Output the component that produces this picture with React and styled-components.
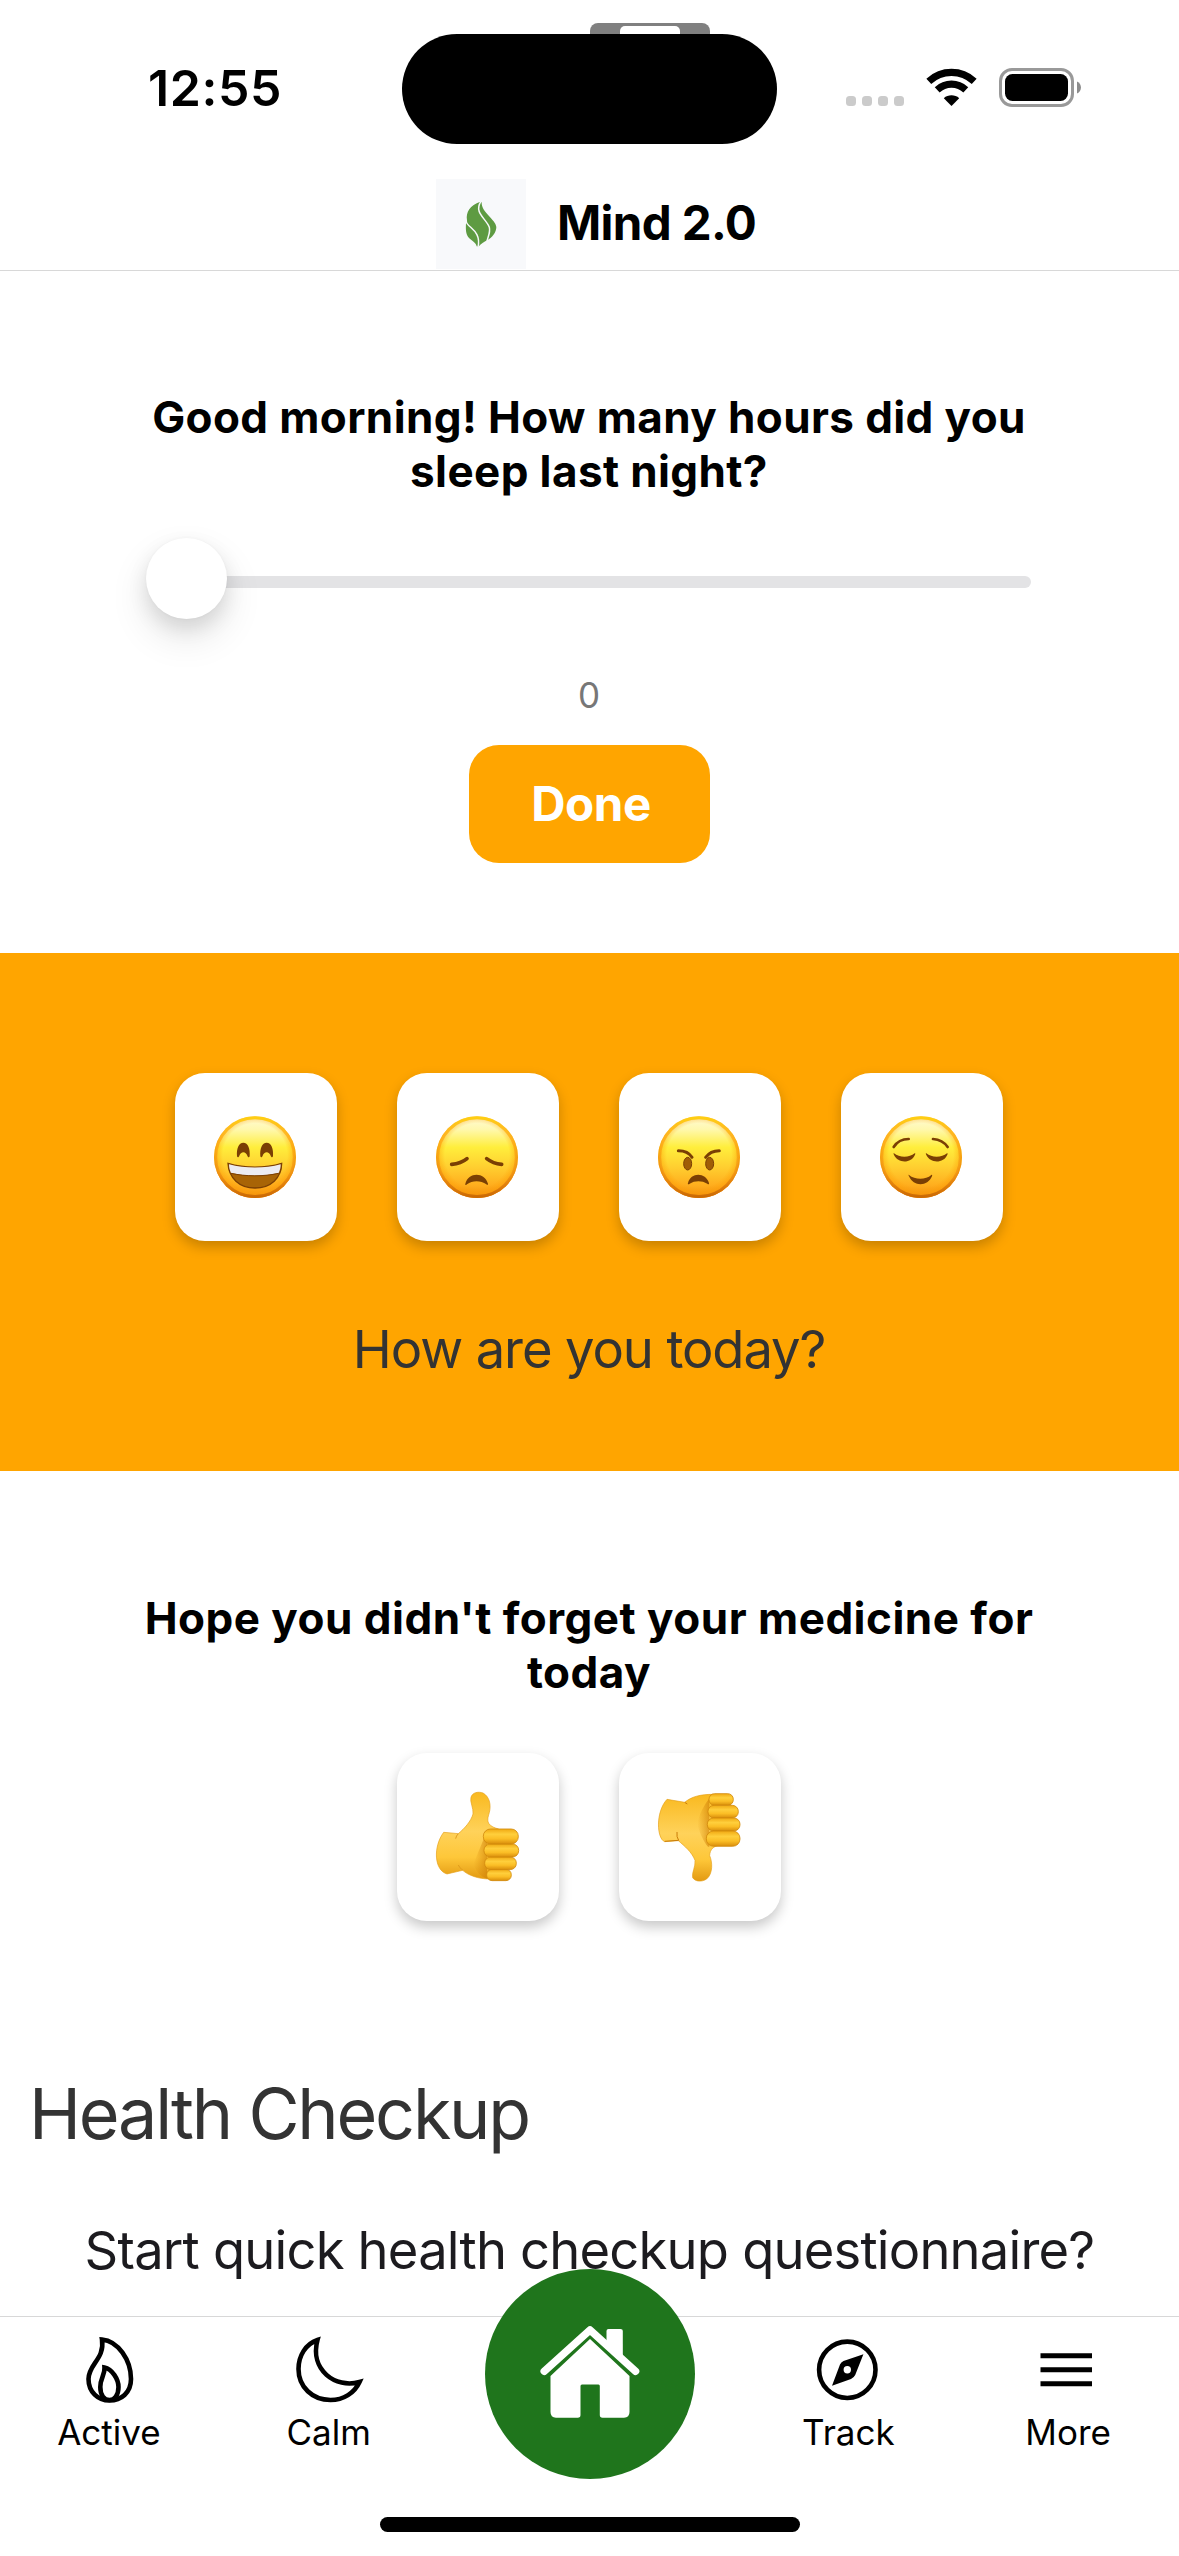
import React from "react";
import styled, { createGlobalStyle } from "styled-components";

const GlobalStyle = createGlobalStyle`
  *, *::before, *::after { box-sizing: border-box; }
  body { margin: 0; background: #fff; }
`;

const Screen = styled.div`
  display: flex;
  flex-direction: column;
  width: 1179px;
  height: 2556px;
  overflow: hidden;
  background: #fff;
  color: #000;
  font-family: Inter, "Liberation Sans", sans-serif;
`;

/* ---------- status bar ---------- */
const StatusBar = styled.header`
  display: grid;
  grid-template-columns: 402px 375px 402px;
  height: 179px;
  flex: none;
`;
const Clock = styled.div`
  padding: 58px 0 0 148px;
  font-size: 50px;
  line-height: 60px;
  font-weight: 600;
  letter-spacing: ${(p) => p.$tracking}px;
`;
const IslandArea = styled.div`
  position: relative;
  padding-top: 33.5px;
`;
const Island = styled.div`
  position: relative;
  height: 110.5px;
  border-radius: 55.5px;
  background: #000;
`;
const BackTab = styled.div`
  position: absolute;
  left: 188px;
  top: 23px;
  width: 120px;
  height: 30px;
  padding: 3px 30px 0;
  border-radius: 8px;
  background: #808080;
  &::after {
    content: "";
    display: block;
    height: 20px;
    border-radius: 5px;
    background: #fff;
  }
`;
const StatusIcons = styled.div`
  display: flex;
  align-items: flex-start;
  padding: 68px 0 0 69px;
`;
const Signal = styled.div`
  display: flex;
  gap: 6px;
  margin-top: 28px;
  margin-right: 22px;
`;
const Dot = styled.i`
  width: 10px;
  height: 10px;
  border-radius: 3.5px;
  background: #cbcbcb;
`;
const BatterySlot = styled.div`
  margin-left: 22px;
`;

/* ---------- title ---------- */
const TitleBar = styled.div`
  display: flex;
  align-items: flex-start;
  flex: none;
  height: 92px;
  padding-left: 436px;
  border-bottom: 1px solid #d8d8d8;
`;
const LogoTile = styled.div`
  width: 90px;
  height: 90px;
  background: #f8f9fb;
`;
const Title = styled.h1`
  margin: 15px 0 0 31px;
  font-size: 47.5px;
  line-height: 58px;
  font-weight: 700;
  letter-spacing: ${(p) => p.$tracking}px;
`;

/* ---------- content ---------- */
const Content = styled.main`
  flex: 1;
  min-height: 0;
  overflow: hidden;
`;
const Section = styled.section`
  display: flex;
  flex-direction: column;
  align-items: center;
  height: ${(p) => p.$height}px;
  padding-top: ${(p) => p.$top}px;
  padding-right: 1px;
  background: ${(p) => p.$bg || "transparent"};
`;
const Question = styled.h2`
  margin: 0;
  font-size: 44px;
  line-height: 54px;
  font-weight: 700;
  text-align: center;
  white-space: nowrap;
  letter-spacing: ${(p) => p.$tracking}px;
`;
const Slider = styled.div`
  display: flex;
  align-items: center;
  width: 886px;
  height: 81px;
  margin-top: 40px;
`;
const Thumb = styled.div`
  flex: none;
  position: relative;
  width: 81px;
  height: 81px;
  border-radius: 50%;
  background: #fff;
  box-shadow: 0 18px 39px rgba(0, 0, 0, 0.11), 0 9px 20px rgba(0, 0, 0, 0.1), 0 0 3px rgba(0, 0, 0, 0.04);
`;
const Track = styled.div`
  flex: 1;
  height: 12px;
  margin: 6px 1px 0 -40px;
  border-radius: 6px;
  background: #e3e3e5;
`;
const Value = styled.div`
  margin-top: 55px;
  font-size: 35px;
  line-height: 42px;
  color: #777;
`;
const DoneButton = styled.button`
  width: 241px;
  height: 118px;
  margin-top: 29px;
  padding: 0 0 0 4px;
  border: 0;
  border-radius: 30px;
  background: #ffa500;
  color: #fff;
  font: 700 47.5px/58px Inter, "Liberation Sans", sans-serif;
  letter-spacing: ${(p) => p.$tracking}px;
`;
const CardRow = styled.div`
  display: flex;
  gap: 60px;
  margin-top: ${(p) => p.$mt || 0}px;
`;
const Card = styled.button`
  display: flex;
  align-items: center;
  justify-content: center;
  width: 162px;
  height: 168px;
  padding: 0 ${(p) => p.$inset || 0}px 0 0;
  border: 0;
  border-radius: 30px;
  background: #fff;
  box-shadow: 0 6px 13px rgba(0, 0, 0, 0.22);
`;
const MoodPrompt = styled.p`
  margin: 77px 0 0;
  font-size: 52.5px;
  line-height: 62px;
  color: #333;
  letter-spacing: ${(p) => p.$tracking}px;
`;
const Checkup = styled.section`
  padding-top: 151px;
`;
const CheckupTitle = styled.h2`
  margin: 0 0 0 29px;
  font-size: 70px;
  line-height: 84px;
  font-weight: 400;
  color: #333;
  letter-spacing: ${(p) => p.$tracking}px;
`;
const CheckupText = styled.p`
  margin: 63px 0 0;
  font-size: 52.5px;
  line-height: 62px;
  text-align: center;
  white-space: nowrap;
  color: #1c1b1f;
  letter-spacing: ${(p) => p.$tracking}px;
`;

/* ---------- tab bar ---------- */
const TabBar = styled.nav`
  position: relative;
  flex: none;
  height: 240px;
  border-top: 1px solid #d8d8d8;
  background: #fff;
`;
const Tabs = styled.div`
  display: flex;
  width: 1179px;
  height: 200px;
  margin-left: -1px;
`;
const Tab = styled.div`
  display: flex;
  flex: 1;
  flex-direction: column;
  align-items: center;
  padding-top: 13px;
  svg { display: block; }
`;
const TabLabel = styled.span`
  margin-top: 1px;
  font-size: 35px;
  line-height: 42px;
`;
const HomeSlot = styled.div`
  flex: none;
  width: 300px;
`;
const HomeButton = styled.button`
  display: flex;
  align-items: flex-start;
  justify-content: center;
  width: 210px;
  height: 210px;
  margin: -48px 0 0 46px;
  padding: 56px 0 0;
  border: 0;
  border-radius: 50%;
  background: #1f751c;
`;
const HomeIndicator = styled.div`
  width: 420px;
  height: 15px;
  margin: 0 auto;
  border-radius: 7.5px;
  background: #000;
`;

/* ---------- drawings ---------- */
const Logo = () => (
  <svg width="90" height="90" viewBox="48 27 270 270">
    <path fill="#5e9b42" d="M181 95C150 105 137 126 141 151C142 157 141 158 138 160C137 178 137 193 147 204C156 213 169 219 170 229L175 230C182 222 193 215 201 211C216 203 229 188 229 171C227 148 184 128 185 97Z" />
    <path fill="none" stroke="#f8f9fb" strokeWidth="4.5" d="M183 94C160 128 199 146 208 172C212 188 203 201 201 214" />
    <path fill="none" stroke="#f8f9fb" strokeWidth="4.5" d="M138 154C143 174 185 181 174 232" />
  </svg>
);

const Wifi = () => (
  <svg width="51" height="39" viewBox="0 0 51 39" fill="none" stroke="#000">
    <path strokeWidth="7.2" d="M2.8 13.3C15.8 1.4 35.2 1.4 48.2 13.3" />
    <path strokeWidth="7.2" d="M11.2 21.9C19.4 14.3 31.6 14.3 39.8 21.9" />
    <path fill="#000" stroke="none" d="M17.8 30.2C22 26.4 29 26.4 33.2 30.2L25.5 38Z" />
  </svg>
);

const Battery = () => (
  <svg width="83" height="39" viewBox="0 0 83 39">
    <rect x="1.5" y="1.5" width="72" height="36" rx="11.5" fill="none" stroke="#999" strokeWidth="3" />
    <rect x="6" y="6" width="63" height="27" rx="7.5" />
    <path fill="#8c8c8c" d="M78 13.5C83.3 15.5 83.3 23.5 78 25.5Z" />
  </svg>
);

const brown = "#7a3f04";

const Face = ({ id, children }) => (
  <svg width="82" height="82.3" viewBox="0 0 246 247">
    <defs>
      <linearGradient id={`${id}-base`} x1="0" y1="0" x2="0" y2="1">
        <stop offset="0" stopColor="#fffbd6" />
        <stop offset=".16" stopColor="#fff8ae" />
        <stop offset=".38" stopColor="#ffee3c" />
        <stop offset=".62" stopColor="#ffcf30" />
        <stop offset=".84" stopColor="#ffae1e" />
        <stop offset="1" stopColor="#f08f10" />
      </linearGradient>
      <radialGradient id={`${id}-edge`} cx=".5" cy=".48" r=".53">
        <stop offset=".74" stopColor="#ff9c00" stopOpacity="0" />
        <stop offset=".9" stopColor="#fb9700" stopOpacity=".45" />
        <stop offset="1" stopColor="#e07205" stopOpacity=".95" />
      </radialGradient>
      <linearGradient id={`${id}-rim`} x1="0" y1="0" x2="0" y2="1">
        <stop offset="0" stopColor="#ffce12" />
        <stop offset=".3" stopColor="#ff9d08" stopOpacity=".6" />
        <stop offset=".7" stopColor="#e88310" stopOpacity=".5" />
        <stop offset="1" stopColor="#c46404" stopOpacity=".85" />
      </linearGradient>
    </defs>
    <circle cx="123" cy="123.5" r="123" fill={`url(#${id}-base)`} />
    <circle cx="123" cy="123.5" r="123" fill={`url(#${id}-edge)`} />
    <circle cx="123" cy="123.5" r="118" fill="none" stroke={`url(#${id}-rim)`} strokeWidth="9" />
    {children}
  </svg>
);

const HappyFace = () => (
  <Face id="happy">
    <path fill={brown} d="M69 121C67 98 74 80 88 80C102 80 109 98 107 121C105 126 101 123 100 119C96 105 80 105 76 119C75 123 71 126 69 121Z" />
    <path fill={brown} d="M139 121C137 98 144 80 158 80C172 80 179 98 177 121C175 126 171 123 170 119C166 105 150 105 146 119C145 123 141 126 139 121Z" />
    <path fill="#a86406" stroke={brown} strokeWidth="4" d="M42 142C92 157 154 157 203 142C203 186 170 216 123 216C76 216 44 186 42 142Z" />
    <path fill="#ececf2" d="M45 145C92 158 154 158 200 145C200 154 198 163 194 171C150 181 95 181 51 171C47 163 45 154 45 145Z" />
    <path fill="none" stroke={brown} strokeWidth="3" d="M51 172C95 182 150 182 194 172" />
  </Face>
);
const SadFace = () => (
  <Face id="sad">
    <path fill="none" stroke={brown} strokeWidth="11" strokeLinecap="round" d="M47 145Q75 143 93 128M152 128Q171 143 197 145" />
    <path fill={brown} d="M88 203C97 167 146 167 156 203C157 208 153 207 151 205C134 193 109 193 93 205C90 208 87 207 88 203Z" />
  </Face>
);
const AngryFace = () => (
  <Face id="angry">
    <path fill="none" stroke={brown} strokeWidth="9" strokeLinecap="round" d="M61 104Q90 104 102 124M143 124Q157 104 184 104" />
    <ellipse cx="89" cy="143" rx="12" ry="19" fill="#a05d06" stroke={brown} strokeWidth="3" />
    <ellipse cx="155" cy="143" rx="12" ry="19" fill="#a05d06" stroke={brown} strokeWidth="3" />
    <path fill={brown} d="M90 201C98 168 143 168 153 201C154 206 150 205 148 203C132 193 110 193 95 203C92 206 88 205 90 201Z" />
  </Face>
);
const CalmFace = () => (
  <Face id="calm">
    <path fill="none" stroke={brown} strokeWidth="8" strokeLinecap="round" d="M41 93Q56 69 86 69M159 69Q188 71 203 93" />
    <path fill={brown} d="M42 112C58 126 88 126 104 112C107 111 106 114 105 116C94 143 54 143 42 117C40 113 40 111 42 112Z" />
    <path fill={brown} d="M139 112C155 126 185 126 201 112C204 111 203 114 202 116C191 143 151 143 139 117C137 113 137 111 139 112Z" />
    <path fill={brown} d="M87 177C105 192 137 192 154 177C157 175 157 178 156 181C143 213 100 213 87 181C85 177 85 175 87 177Z" />
  </Face>
);

const HandDefs = ({ id }) => (
  <defs>
    <linearGradient id={`${id}-palm`} x1="0" y1="0" x2="0" y2="1">
      <stop offset="0" stopColor="#f9b91f" />
      <stop offset=".45" stopColor="#ffd25a" />
      <stop offset=".75" stopColor="#fec739" />
      <stop offset="1" stopColor="#e39a12" />
    </linearGradient>
    <linearGradient id={`${id}-finger`} x1="0" y1="0" x2="0" y2="1">
      <stop offset="0" stopColor="#f0a913" />
      <stop offset=".35" stopColor="#ffcf3c" />
      <stop offset=".65" stopColor="#fbbe26" />
      <stop offset="1" stopColor="#d98d0b" />
    </linearGradient>
    <linearGradient id={`${id}-fold`} x1="0" y1="0" x2="1" y2="0">
      <stop offset="0" stopColor="#d98a0a" stopOpacity="0" />
      <stop offset="1" stopColor="#cf8007" stopOpacity=".65" />
    </linearGradient>
  </defs>
);
const Fingers = ({ id, items }) =>
  items.map(([x, y, w, h]) => (
    <rect key={y} x={x} y={y} width={w} height={h} rx={h / 2.1} fill={`url(#${id}-finger)`} stroke="#d38a0c" strokeWidth="2.5" />
  ));

const ThumbUp = () => (
  <svg width="90" height="93.3" viewBox="190 180 270 280">
    <HandDefs id="up" />
    <path fill="url(#up-palm)" stroke="#e5a01a" strokeWidth="2" d="M222 307L266 311C285 295 304 274 310 252C312 234 300 216 304 202C308 187 326 184 340 189C359 200 364 222 360 243C357 257 351 268 357 280C364 290 375 294 387 297L400 440L360 447C325 447 296 436 279 421L232 432C193 421 190 350 222 307Z" />
    <path fill="none" stroke="#df9c1d" strokeWidth="3" d="M266 311Q259 318 258 326M266 405Q269 414 280 421" />
    <path fill="url(#up-fold)" d="M343 325C333 350 322 375 312 400C318 425 332 440 352 446L352 325Z" />
    <Fingers id="up" items={[[351, 418, 74, 34], [345, 381, 95, 38], [343, 342, 104, 39], [341, 297, 105, 45]]} />
  </svg>
);
const ThumbDown = () => (
  <svg width="90" height="93.3" viewBox="855 180 270 280">
    <HandDefs id="down" />
    <path fill="url(#down-palm)" stroke="#e5a01a" strokeWidth="2" d="M891 208L944 217C965 200 990 193 1030 193L1050 345C1030 349 1020 358 1019 377C1027 395 1030 430 1010 447C995 457 975 455 968 443C965 426 977 412 975 391C965 365 943 348 925 332L884 335C860 326 856 246 891 208Z" />
    <path fill="none" stroke="#c97c09" strokeWidth="3" d="M884 334L926 331Q919 322 921 306M944 217L952 222" />
    <path fill="url(#down-fold)" d="M1018 205C1003 225 985 255 982 285C990 310 1000 335 1014 350L1018 350Z" />
    <Fingers id="down" items={[[1017, 191, 73, 35], [1014, 226, 91, 38], [1012, 264, 98, 39], [1009, 303, 101, 46]]} />
  </svg>
);

const line = { fill: "none", stroke: "#000", strokeWidth: 4.6, strokeLinejoin: "miter" };
const FlameIcon = () => (
  <svg width="80" height="80" viewBox="69 2330 80 80" {...line}>
    <path d="M102 2339.5C118 2341 131 2360 131 2379C131 2393 121 2400.5 109.5 2400.5C98 2400.5 88.5 2392 88.5 2379C88.5 2364 105 2359 102 2339.5Z" />
    <path d="M104.5 2367.5C112 2369 118.5 2379 118.5 2387C118.5 2395 114.5 2400 109.5 2400C104 2400 100.3 2395 100.3 2387C100.3 2378 105 2375 104.5 2367.5Z" />
  </svg>
);
const MoonIcon = () => (
  <svg width="80" height="80" viewBox="289.5 2330 80 80" {...line}>
    <path d="M318 2340C306 2344 299 2356 299 2369C299 2387 313 2400 331 2400C344 2400 355 2393 360 2382C336 2389 310 2370 318 2340Z" />
  </svg>
);
const CompassIcon = () => (
  <svg width="80" height="80" viewBox="808 2330 80 80">
    <circle cx="847.3" cy="2369.8" r="28.2" {...line} />
    <path fillRule="evenodd" d="M863.4 2354.2L855.2 2375Q854 2377.5 851 2379L832 2385.7L840 2364.5Q841 2362 843.5 2361Z M847.3 2366A3.7 3.7 0 1 0 847.3 2373.4A3.7 3.7 0 1 0 847.3 2366Z" />
  </svg>
);
const MenuIcon = () => (
  <svg width="80" height="80" viewBox="1028 2330 80 80">
    <path stroke="#000" strokeWidth="5" d="M1040.5 2355.7H1092M1040.5 2369.7H1092M1040.5 2383.7H1092" />
  </svg>
);
const HomeIcon = () => (
  <svg width="100" height="94" viewBox="539.5 2326 100 94">
    <path fill="none" stroke="#fff" strokeWidth="7.6" strokeLinecap="round" strokeLinejoin="round" d="M543.8 2372.2L589.5 2331L635 2372.2" />
    <path fill="#fff" d="M606 2342V2332Q606 2330 608 2330H620Q622.3 2330 622.3 2332V2360L606 2345Z" />
    <path fill="#fff" d="M589.5 2340L629 2377V2413Q629 2418.7 623.5 2418.7H602Q599.3 2418.7 599.3 2416V2387Q599.3 2385.5 598 2385.5H581.5Q580 2385.5 580 2387V2416Q580 2418.7 577.3 2418.7H555.5Q550 2418.7 550 2413V2377Z" />
  </svg>
);

export default function App() {
  return (
    <Screen>
      <GlobalStyle />
      <StatusBar>
        <Clock $tracking={0.6}>12:55</Clock>
        <IslandArea>
          <BackTab />
          <Island />
        </IslandArea>
        <StatusIcons>
          <Signal>
            <Dot />
            <Dot />
            <Dot />
            <Dot />
          </Signal>
          <Wifi />
          <BatterySlot>
            <Battery />
          </BatterySlot>
        </StatusIcons>
      </StatusBar>
      <TitleBar>
        <LogoTile>
          <Logo />
        </LogoTile>
        <Title $tracking={-0.65}>Mind 2.0</Title>
      </TitleBar>

      <Content>
        <Section $height={682} $top={119}>
          <Question $tracking={0.4}>
            Good morning! How many hours did you
            <br />
            sleep last night?
          </Question>
          <Slider>
            <Thumb />
            <Track />
          </Slider>
          <Value>0</Value>
          <DoneButton $tracking={-0.4}>Done</DoneButton>
        </Section>

        <Section $height={518} $top={120} $bg="#ffa500">
          <CardRow>
            <Card $inset={2}><HappyFace /></Card>
            <Card $inset={2}><SadFace /></Card>
            <Card $inset={2}><AngryFace /></Card>
            <Card $inset={2}><CalmFace /></Card>
          </CardRow>
          <MoodPrompt $tracking={-1.1}>How are you today?</MoodPrompt>
        </Section>

        <Section $height={450} $top={120}>
          <Question $tracking={0.5}>
            Hope you didn't forget your medicine for
            <br />
            today
          </Question>
          <CardRow $mt={54}>
            <Card><ThumbUp /></Card>
            <Card><ThumbDown /></Card>
          </CardRow>
        </Section>

        <Checkup>
          <CheckupTitle $tracking={-2.2}>Health Checkup</CheckupTitle>
          <CheckupText $tracking={-0.8}>Start quick health checkup questionnaire?</CheckupText>
        </Checkup>
      </Content>

      <TabBar>
        <Tabs>
          <Tab><FlameIcon /><TabLabel>Active</TabLabel></Tab>
          <Tab><MoonIcon /><TabLabel>Calm</TabLabel></Tab>
          <HomeSlot>
            <HomeButton aria-label="Home"><HomeIcon /></HomeButton>
          </HomeSlot>
          <Tab><CompassIcon /><TabLabel>Track</TabLabel></Tab>
          <Tab><MenuIcon /><TabLabel>More</TabLabel></Tab>
        </Tabs>
        <HomeIndicator />
      </TabBar>
    </Screen>
  );
}
